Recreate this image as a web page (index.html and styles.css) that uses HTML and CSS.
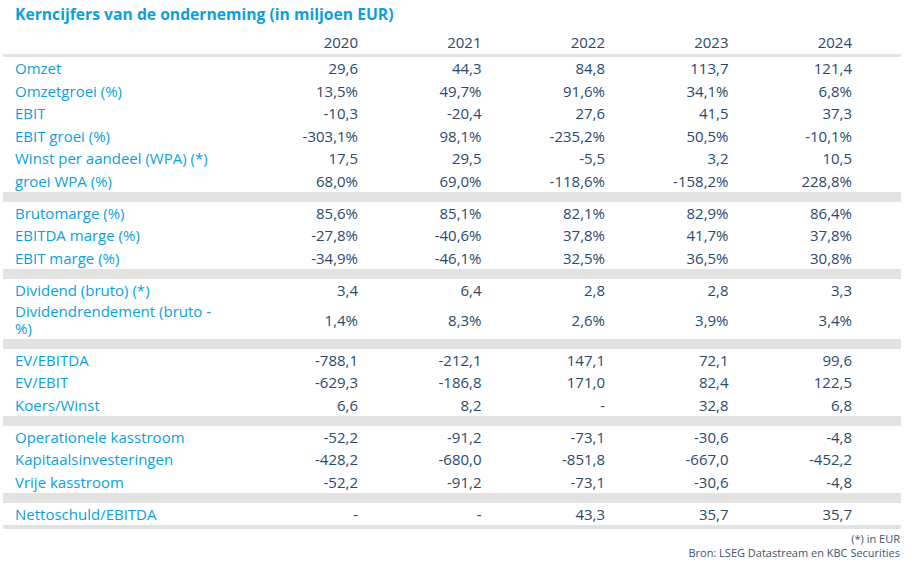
FILE: index.html
```html
<!DOCTYPE html>
<html lang="nl">
<head>
<meta charset="utf-8">
<title>Kerncijfers</title>
<link rel="stylesheet" href="styles.css">
</head>
<body>
<div class="page">
  <h1 class="title">Kerncijfers van de onderneming (in miljoen EUR)</h1>
  <table class="kc">
    <colgroup>
      <col class="c-label"><col class="c-val"><col class="c-val"><col class="c-val"><col class="c-val"><col class="c-val">
    </colgroup>
    <thead>
      <tr class="head"><th></th><th>2020</th><th>2021</th><th>2022</th><th>2023</th><th>2024</th></tr>
    </thead>
    <tbody>
      <tr><td class="lbl">Omzet</td><td>29,6</td><td>44,3</td><td>84,8</td><td>113,7</td><td>121,4</td></tr>
      <tr><td class="lbl">Omzetgroei (%)</td><td>13,5%</td><td>49,7%</td><td>91,6%</td><td>34,1%</td><td>6,8%</td></tr>
      <tr><td class="lbl">EBIT</td><td>-10,3</td><td>-20,4</td><td>27,6</td><td>41,5</td><td>37,3</td></tr>
      <tr><td class="lbl">EBIT groei (%)</td><td>-303,1%</td><td>98,1%</td><td>-235,2%</td><td>50,5%</td><td>-10,1%</td></tr>
      <tr><td class="lbl">Winst per aandeel (WPA) (*)</td><td>17,5</td><td>29,5</td><td>-5,5</td><td>3,2</td><td>10,5</td></tr>
      <tr><td class="lbl">groei WPA (%)</td><td>68,0%</td><td>69,0%</td><td>-118,6%</td><td>-158,2%</td><td>228,8%</td></tr>
      <tr class="band"><td colspan="6"></td></tr>
      <tr><td class="lbl">Brutomarge (%)</td><td>85,6%</td><td>85,1%</td><td>82,1%</td><td>82,9%</td><td>86,4%</td></tr>
      <tr><td class="lbl">EBITDA marge (%)</td><td>-27,8%</td><td>-40,6%</td><td>37,8%</td><td>41,7%</td><td>37,8%</td></tr>
      <tr><td class="lbl">EBIT marge (%)</td><td>-34,9%</td><td>-46,1%</td><td>32,5%</td><td>36,5%</td><td>30,8%</td></tr>
      <tr class="band"><td colspan="6"></td></tr>
      <tr><td class="lbl">Dividend (bruto) (*)</td><td>3,4</td><td>6,4</td><td>2,8</td><td>2,8</td><td>3,3</td></tr>
      <tr class="tall"><td class="lbl"><span class="wrap">Dividendrendement (bruto - %)</span></td><td>1,4%</td><td>8,3%</td><td>2,6%</td><td>3,9%</td><td>3,4%</td></tr>
      <tr class="band"><td colspan="6"></td></tr>
      <tr><td class="lbl">EV/EBITDA</td><td>-788,1</td><td>-212,1</td><td>147,1</td><td>72,1</td><td>99,6</td></tr>
      <tr><td class="lbl">EV/EBIT</td><td>-629,3</td><td>-186,8</td><td>171,0</td><td>82,4</td><td>122,5</td></tr>
      <tr><td class="lbl">Koers/Winst</td><td>6,6</td><td>8,2</td><td>-</td><td>32,8</td><td>6,8</td></tr>
      <tr class="band"><td colspan="6"></td></tr>
      <tr><td class="lbl">Operationele kasstroom</td><td>-52,2</td><td>-91,2</td><td>-73,1</td><td>-30,6</td><td>-4,8</td></tr>
      <tr><td class="lbl">Kapitaalsinvesteringen</td><td>-428,2</td><td>-680,0</td><td>-851,8</td><td>-667,0</td><td>-452,2</td></tr>
      <tr><td class="lbl">Vrije kasstroom</td><td>-52,2</td><td>-91,2</td><td>-73,1</td><td>-30,6</td><td>-4,8</td></tr>
      <tr class="band"><td colspan="6"></td></tr>
      <tr class="last"><td class="lbl">Nettoschuld/EBITDA</td><td>-</td><td>-</td><td>43,3</td><td>35,7</td><td>35,7</td></tr>
    </tbody>
  </table>
  <div class="foot">
    <div>(*) in EUR</div>
    <div>Bron: LSEG Datastream en KBC Securities</div>
  </div>
</div>
</body>
</html>
```
FILE: styles.css
```css
html, body {
  margin: 0;
  padding: 0;
  background: #ffffff;
}

.page {
  padding: 0 15px 0 3px;
  font-family: "Open Sans", "Noto Sans", "Liberation Sans", sans-serif;
  color: #2a4a6e;
}

.title {
  margin: 0;
  padding: 3px 0 0 12px;
  height: 30px;
  box-sizing: border-box;
  font-size: 15.7px;
  line-height: 22px;
  font-weight: 700;
  color: #0b9fe0;
}

.kc {
  width: 898px;
  border-collapse: collapse;
  table-layout: fixed;
  font-size: 15px;
}

.c-label { width: 280.5px; }
.c-val { width: 123.5px; }

.kc th,
.kc td {
  padding: 0 49px 0 0;
  text-align: right;
  font-weight: 400;
  white-space: nowrap;
  height: 22.5px;
  line-height: 18px;
  vertical-align: middle;
}

.kc thead th {
  height: 24px;
  border-bottom: 3px solid #e3e3e3;
}

.kc td.lbl {
  text-align: left;
  padding: 0 0 0 12px;
  color: #0b9fe0;
}

.kc tr.tall td { height: 38px; }

.wrap {
  display: inline-block;
  max-width: 204px;
  white-space: normal;
  line-height: 17px;
}

.kc tr.band td {
  height: 9.5px;
  padding: 0;
  background: #e3e3e3;
}

.kc tr.last td {
  border-bottom: 4px solid #e3e3e3;
}

.foot {
  padding-top: 3px;
  text-align: right;
  font-size: 11px;
  line-height: 14px;
  color: #3b5573;
  padding-right: 1px;
}
```
